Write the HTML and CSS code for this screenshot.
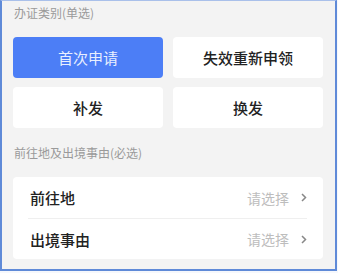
FILE: index.html
```html
<!doctype html>
<html>

<head>
  <title>办证</title>
  <link rel="stylesheet" href="styles.css">
</head>

<body>
  <div class="frame">
    <p class="section-title">办证类别(单选)</p>
    <div class="options">
      <button type="button" class="option active">首次申请</button>
      <button type="button" class="option">失效重新申领</button>
      <button type="button" class="option">补发</button>
      <button type="button" class="option">换发</button>
    </div>
    <p class="section-title second">前往地及出境事由(必选)</p>
    <div class="card">
      <div class="row">
        <span class="label">前往地</span>
        <span class="value">请选择
          <svg class="arrow" width="6" height="9" viewBox="0 0 6 9"><path d="M1 1 L4.5 4.5 L1 8" fill="none" stroke="#888" stroke-width="1.5"/></svg>
        </span>
      </div>
      <div class="row">
        <span class="label">出境事由</span>
        <span class="value">请选择
          <svg class="arrow" width="6" height="9" viewBox="0 0 6 9"><path d="M1 1 L4.5 4.5 L1 8" fill="none" stroke="#888" stroke-width="1.5"/></svg>
        </span>
      </div>
    </div>
  </div>
</body>

</html>
```

FILE: styles.css
```css
html {
  font-family: "Noto Sans CJK SC", "Noto Sans", sans-serif;
}

body {
  margin: 0;
  background: #f6f8fc;
}

.frame {
  box-sizing: border-box;
  width: 337px;
  height: 271px;
  background: #f3f3f3;
  border: 2px solid #5f8ad8;
  border-top: 1px solid #a9c0ea;
  padding: 5px 12px 0 11px;
}

.section-title {
  margin: 0;
  font-size: 12px;
  line-height: 14px;
  color: #9a9a9a;
  padding-left: 1px;
}

.section-title.second {
  margin-top: 18px;
}

.options {
  display: grid;
  grid-template-columns: 150px 150px;
  grid-auto-rows: 41px;
  gap: 9px 10px;
  margin-top: 17px;
}

.option {
  font: inherit;
  font-size: 15px;
  font-weight: 500;
  color: #222;
  background: #fff;
  border: 0;
  border-radius: 4px;
  padding: 0;
}

.option.active {
  background: #4c7ef6;
  color: #e8efff;
  font-weight: 400;
}

.card {
  margin-top: 17px;
  width: 310px;
  background: #fff;
  border-radius: 4px;
  padding: 0 16px 0 15px;
  box-sizing: border-box;
}

.row {
  height: 41px;
  display: flex;
  align-items: center;
  justify-content: space-between;
}

.row + .row {
  border-top: 1px solid #efefef;
  height: 40px;
}

.label {
  font-size: 15px;
  font-weight: 500;
  color: #222;
  padding-left: 2px;
}

.value {
  display: flex;
  align-items: center;
  gap: 12px;
  font-size: 14px;
  color: #bdbdbd;
}
```
